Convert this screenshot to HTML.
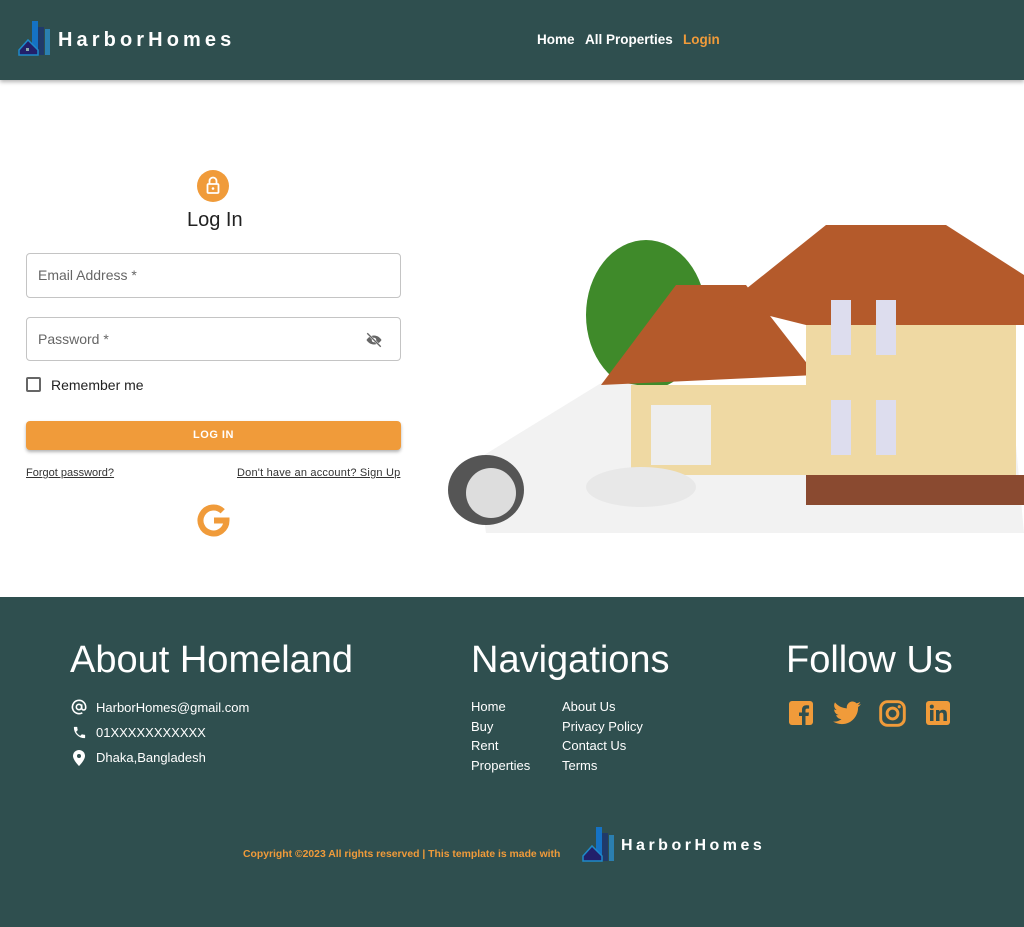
<!DOCTYPE html>
<html><head><meta charset="utf-8"><style>
*{margin:0;padding:0;box-sizing:border-box}
body{width:1024px;height:927px;font-family:"Liberation Sans",Arial,sans-serif;background:#fff;position:relative;overflow:hidden}
.hdr{position:absolute;left:0;top:0;width:1024px;height:80px;background:#2f4f4f;box-shadow:0 2px 4px rgba(0,0,0,.3)}
.logo{position:absolute;left:18px;top:20px}
.brand{position:absolute;left:58px;top:29px;color:#fff;font-weight:bold;font-size:20px;letter-spacing:4.1px}
.nav{position:absolute;top:32px;font-size:13.5px;font-weight:bold;color:#fff}
.o{color:#f09b3a}
.a{position:absolute}
.field{position:absolute;left:26px;width:375px;border:1px solid #c4c4c4;border-radius:4px;background:#fff}
.lbl{position:absolute;left:11px;font-size:14px;color:#666}
.ft{position:absolute;left:0;top:597px;width:1024px;height:330px;background:#2f4f4f;color:#fff}
.h2{position:absolute;font-size:38px;color:#fff;top:42px}
.fl{position:absolute;font-size:13px;color:#fff;line-height:19.5px}
</style></head><body>
<div class="hdr">
 <svg class="logo" width="34" height="36" viewBox="0 0 34 36"><rect x="14" y="1" width="6" height="34" fill="#1572c4"/><rect x="20" y="7" width="6" height="28" fill="#203a6a"/><rect x="27" y="9" width="5" height="26" fill="#2b7fb0"/><path d="M1 30 L10 20 L20 30 V35 H1Z" fill="#22206a" stroke="#1e8ac9" stroke-width="1.5"/><rect x="8" y="28" width="3" height="3" fill="#8aa"/></svg>
 <div class="brand">HarborHomes</div>
 <div class="nav" style="left:537px">Home</div>
 <div class="nav" style="left:585px">All Properties</div>
 <div class="nav o" style="left:683px">Login</div>
</div>

<div class="a" style="left:197px;top:170px;width:32px;height:32px;border-radius:50%;background:#f09b3a"><svg width="32" height="32" viewBox="0 0 32 32"><rect x="10.5" y="14" width="11" height="9" rx="1" fill="none" stroke="#fff" stroke-width="1.8"/><path d="M12.5 14v-3a3.5 3.5 0 0 1 7 0v3" fill="none" stroke="#fff" stroke-width="1.8"/><circle cx="16" cy="18.5" r="1.3" fill="#fff"/></svg></div>
<div class="a" style="left:187px;top:209px;font-size:20px;color:#222">Log In</div>
<div class="field" style="top:253px;height:45px"><div class="lbl" style="top:13px">Email Address *</div></div>
<div class="field" style="top:317px;height:44px"><div class="lbl" style="top:13px">Password *</div>
 <svg class="a" style="left:337px;top:13px" width="20" height="18" viewBox="0 0 24 24"><path d="M12 6c-5 0-8.5 3.5-10 6 1.5 2.5 5 6 10 6s8.5-3.5 10-6c-1.5-2.5-5-6-10-6z" fill="#666"/><circle cx="12" cy="12" r="3" fill="#fff"/><path d="M3 3l18 18" stroke="#fff" stroke-width="3"/><path d="M3 3l18 18" stroke="#666" stroke-width="1.8"/></svg></div>
<div class="a" style="left:26px;top:377px;width:15px;height:15px;border:2px solid #666;border-radius:2px"></div>
<div class="a" style="left:51px;top:377px;font-size:14px;color:#222">Remember me</div>
<div class="a" style="left:26px;top:421px;width:375px;height:29px;background:#f09b3a;border-radius:4px;box-shadow:0 2px 3px rgba(0,0,0,.3);color:#fff;font-size:11px;font-weight:bold;text-align:center;line-height:29px;letter-spacing:.5px">LOG IN</div>
<div class="a" style="left:26px;top:467px;font-size:11px;color:#333;text-decoration:underline">Forgot password?</div>
<div class="a" style="left:237px;top:467px;font-size:11px;color:#333;text-decoration:underline;letter-spacing:.2px">Don't have an account? Sign Up</div>
<svg class="a" style="left:197px;top:504px" width="33" height="33" viewBox="0 0 33 33"><path d="M25.7 7.3 A13 13 0 1 0 29.5 16.5 H17" fill="none" stroke="#f09b3a" stroke-width="6"/></svg>

<svg class="a" style="left:446px;top:215px" width="578" height="320" viewBox="0 0 578 320">
 <ellipse cx="200" cy="100" rx="60" ry="75" fill="#3f8a2a"/>
 <path d="M30 245 L160 165 L570 230 L578 318 L40 318Z" fill="#f2f2f2"/>
 <ellipse cx="40" cy="275" rx="38" ry="35" fill="#555"/><ellipse cx="45" cy="278" rx="25" ry="25" fill="#ddd"/>
 <path d="M155 170 L230 70 L300 70 L370 160Z" fill="#b45a2b"/>
 <rect x="185" y="170" width="180" height="90" fill="#efd9a3"/>
 <rect x="205" y="190" width="60" height="60" fill="#eee"/>
 <rect x="360" y="60" width="210" height="225" fill="#efd9a3"/>
 <path d="M280 90 L380 10 L500 10 L578 60 L578 110 L360 110Z" fill="#b45a2b"/>
 <rect x="360" y="260" width="218" height="30" fill="#8a4a30"/>
 <rect x="385" y="85" width="20" height="55" fill="#dde"/><rect x="430" y="85" width="20" height="55" fill="#dde"/>
 <rect x="385" y="185" width="20" height="55" fill="#dde"/><rect x="430" y="185" width="20" height="55" fill="#dde"/>
 <ellipse cx="195" cy="272" rx="55" ry="20" fill="#e8e8e8"/>
</svg>

<div class="ft">
 <div class="h2" style="left:70px">About Homeland</div>
 <div class="h2" style="left:471px">Navigations</div>
 <div class="h2" style="left:786px">Follow Us</div>
 <svg class="a" style="left:71px;top:102px" width="16" height="16" viewBox="0 0 24 24"><path d="M12 2a10 10 0 1 0 5 18.7" fill="none" stroke="#fff" stroke-width="2.4"/><circle cx="12" cy="12" r="4" fill="none" stroke="#fff" stroke-width="2.4"/><path d="M16 8v5.5a3 3 0 0 0 6 0V12A10 10 0 0 0 12 2" fill="none" stroke="#fff" stroke-width="2.4"/></svg>
 <div class="fl" style="left:96px;top:101px">HarborHomes@gmail.com</div>
 <svg class="a" style="left:72px;top:128px" width="15" height="15" viewBox="0 0 24 24"><path d="M6.6 10.8a15 15 0 0 0 6.6 6.6l2.2-2.2c.3-.3.7-.4 1-.2 1.1.4 2.3.6 3.6.6.6 0 1 .4 1 1V20c0 .6-.4 1-1 1A17 17 0 0 1 3 4c0-.6.4-1 1-1h3.5c.6 0 1 .4 1 1 0 1.3.2 2.5.6 3.6.1.3 0 .7-.2 1z" fill="#fff"/></svg>
 <div class="fl" style="left:96px;top:126px">01XXXXXXXXXXX</div>
 <svg class="a" style="left:73px;top:153px" width="12" height="16" viewBox="0 0 12 16"><path d="M6 0a6 6 0 0 1 6 6c0 4-6 10-6 10S0 10 0 6a6 6 0 0 1 6-6z" fill="#fff"/><circle cx="6" cy="6" r="2" fill="#2f4f4f"/></svg>
 <div class="fl" style="left:96px;top:151px">Dhaka,Bangladesh</div>
 <div class="fl" style="left:471px;top:100px">Home<br>Buy<br>Rent<br>Properties</div>
 <div class="fl" style="left:562px;top:100px">About Us<br>Privacy Policy<br>Contact Us<br>Terms</div>
 <svg class="a" style="left:789px;top:104px" width="24" height="24" viewBox="0 0 24 24"><rect width="24" height="24" rx="3" fill="#f09b3a"/><path d="M16.5 24v-9h3l.5-3.5h-3.5V9.3c0-1 .3-1.7 1.8-1.7h1.8V4.5c-.3 0-1.4-.2-2.7-.2-2.7 0-4.4 1.6-4.4 4.6v2.6h-3V15h3v9z" fill="#2f4f4f"/></svg>
 <svg class="a" style="left:833px;top:104px" width="28" height="24" viewBox="0 0 24 20"><path d="M24 2.4c-.9.4-1.8.7-2.8.8 1-.6 1.8-1.6 2.2-2.7-1 .6-2 1-3.1 1.2A4.9 4.9 0 0 0 11.9 6C7.7 5.8 4.1 3.9 1.7.9a4.9 4.9 0 0 0 1.5 6.6c-.8 0-1.6-.3-2.2-.6 0 2.4 1.7 4.4 3.9 4.8-.7.2-1.5.2-2.2.1.6 2 2.4 3.4 4.6 3.4A9.9 9.9 0 0 1 0 17.3 14 14 0 0 0 7.5 19.5c9.1 0 14-7.5 14-14v-.6c1-.7 1.8-1.6 2.5-2.5z" fill="#f09b3a"/></svg>
 <svg class="a" style="left:879px;top:103px" width="27" height="27" viewBox="0 0 24 24"><rect x="1.5" y="1.5" width="21" height="21" rx="6" fill="none" stroke="#f09b3a" stroke-width="2.6"/><circle cx="12" cy="12" r="4.8" fill="none" stroke="#f09b3a" stroke-width="2.6"/><circle cx="18" cy="6" r="1.4" fill="#f09b3a"/></svg>
 <svg class="a" style="left:926px;top:104px" width="24" height="24" viewBox="0 0 24 24"><rect width="24" height="24" rx="3" fill="#f09b3a"/><rect x="4" y="9" width="3.5" height="11" fill="#2f4f4f"/><circle cx="5.8" cy="5.6" r="2" fill="#2f4f4f"/><path d="M10 9h3.3v1.6c.6-1 1.8-1.9 3.6-1.9 3.4 0 4 2.1 4 5V20h-3.5v-5.5c0-1.3-.1-2.9-1.8-2.9-1.8 0-2.1 1.4-2.1 2.8V20H10z" fill="#2f4f4f"/></svg>
 <div class="a" style="left:243px;top:252px;font-size:10.4px;font-weight:bold;color:#f09b3a">Copyright ©2023 All rights reserved | This template is made with</div>
 <svg class="a" style="left:582px;top:229px" width="34" height="36" viewBox="0 0 34 36"><rect x="14" y="1" width="6" height="34" fill="#1572c4"/><rect x="20" y="7" width="6" height="28" fill="#203a6a"/><rect x="27" y="9" width="5" height="26" fill="#2b7fb0"/><path d="M1 30 L10 20 L20 30 V35 H1Z" fill="#22206a" stroke="#1e8ac9" stroke-width="1.5"/></svg>
 <div class="a" style="left:621px;top:240px;font-size:16px;font-weight:bold;color:#fff;letter-spacing:3.5px">HarborHomes</div>
</div>
</body></html>
